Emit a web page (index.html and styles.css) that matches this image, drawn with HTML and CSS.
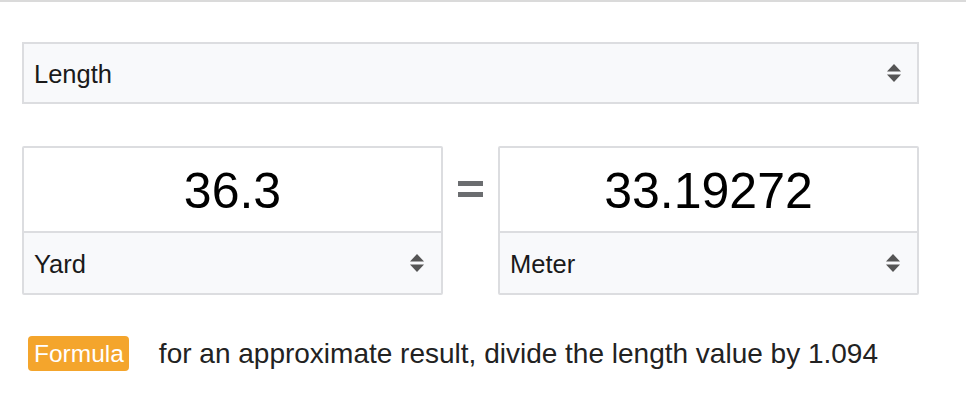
FILE: index.html
```
<!DOCTYPE html>
<html lang="en">
<head>
<meta charset="utf-8">
<title>Length converter</title>
<link rel="stylesheet" href="styles.css">
</head>
<body>
<div class="topline"></div>
<main class="converter">
  <div class="select select-wide">
    <span class="select-label">Length</span>
    <svg class="arrows" width="14" height="18" viewBox="0 0 14 18"><polygon points="0,7.5 7,0 14,7.5"/><polygon points="0,10.5 14,10.5 7,18"/></svg>
  </div>
  <div class="row">
    <div class="box">
      <div class="value">36.3</div>
      <div class="select select-unit">
        <span class="select-label">Yard</span>
        <svg class="arrows" width="14" height="18" viewBox="0 0 14 18"><polygon points="0,7.5 7,0 14,7.5"/><polygon points="0,10.5 14,10.5 7,18"/></svg>
      </div>
    </div>
    <div class="equals"><span class="bar"></span><span class="bar"></span></div>
    <div class="box">
      <div class="value">33.19272</div>
      <div class="select select-unit">
        <span class="select-label">Meter</span>
        <svg class="arrows" width="14" height="18" viewBox="0 0 14 18"><polygon points="0,7.5 7,0 14,7.5"/><polygon points="0,10.5 14,10.5 7,18"/></svg>
      </div>
    </div>
  </div>
  <div class="formula">
    <span class="badge">Formula</span>
    <span class="formula-text">for an approximate result, divide the length value by 1.094</span>
  </div>
</main>
</body>
</html>
```
FILE: styles.css
```
* { box-sizing: border-box; }
html, body { margin: 0; padding: 0; background: #fff; }
body {
  font-family: "Liberation Sans", Arial, sans-serif;
  color: #111;
  width: 966px;
}
.topline {
  height: 2px;
  background: #dadada;
}
.converter {
  padding: 40px 0 0 22px;
  width: 919px;
  display: flex;
  flex-direction: column;
}
.select {
  display: flex;
  align-items: center;
  justify-content: space-between;
  background: #f8f9fb;
  font-size: 25.5px;
  color: #1a1a1a;
  padding: 0 17px 0 10px;
}
.select-wide {
  height: 62px;
  border: 2px solid #dcdde0;
  padding-right: 16px;
}
.select-label { padding-top: 2px; }
.arrows { fill: #555; display: block; }
.row {
  margin-top: 42px;
  display: flex;
  gap: 55px;
  align-items: stretch;
}
.box {
  width: 421px;
  height: 149px;
  border: 2px solid #dcdde0;
  border-radius: 2px;
  display: flex;
  flex-direction: column;
}
.value {
  height: 85px;
  display: flex;
  align-items: center;
  justify-content: center;
  font-size: 50px;
  color: #000;
  border-bottom: 2px solid #dcdde0;
  padding-top: 2px;
}
.select-unit {
  flex: 1;
}
.equals {
  width: 0;
  margin: 0 -27.5px;
  flex: 0 0 0;
  display: flex;
  flex-direction: column;
  align-items: center;
  justify-content: flex-start;
  padding-top: 35px;
  gap: 6px;
}
.bar {
  display: block;
  width: 25px;
  flex: 0 0 5px;
  background: #6b6d70;
}
.formula {
  margin-top: 41px;
  display: flex;
  align-items: center;
  padding-left: 6px;
}
.badge {
  background: #f4a52c;
  color: #fff;
  font-size: 24.5px;
  height: 35px;
  line-height: 36px;
  padding: 0 5px 0 6px;
  border-radius: 4px;
}
.formula-text {
  margin-left: 30px;
  font-size: 28px;
  color: #222;
}
```
